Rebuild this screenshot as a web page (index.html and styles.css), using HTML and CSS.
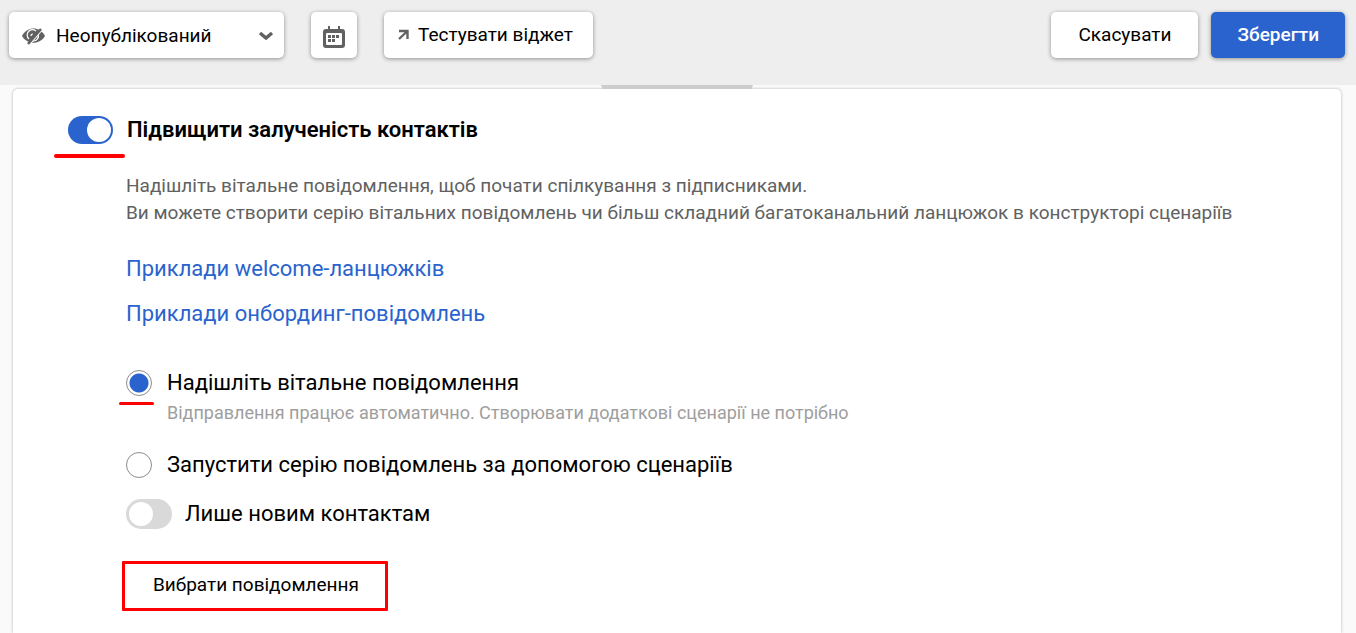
FILE: index.html
```html
<!DOCTYPE html>
<html lang="uk">
<head>
    <meta charset="UTF-8">
    <meta name="viewport" content="width=device-width, initial-scale=1.0">
    <title>Віджет підписки</title>
    <link rel="stylesheet" href="styles.css">
</head>
<body>
    <header class="toolbar">
        <div class="status">
            <svg class="status-eye" width="24" height="20" viewBox="0 0 24 20" aria-hidden="true">
                <path d="M0 10C5 0 18 0 23 10C18 19 5 19 0 10Z" fill="#616161"/>
                <path d="M7 13A5 5 0 0 1 14 5M16 8A5 5 0 0 1 11 15" fill="none" stroke="#fff" stroke-width="1.2"/>
                <path d="M9 10q0-2 2-2" fill="none" stroke="#fff" stroke-width="1.2"/>
                <path d="M8 18L20 4" stroke="#fff" stroke-width="1.4"/>
                <path d="M6 18L19 3" stroke="#616161" stroke-width="2.6"/>
            </svg>
            <select class="status-select" aria-label="Статус">
                <option>Неопублікований</option>
            </select>
            <svg class="status-arrow" width="16" height="10" viewBox="0 0 16 10" aria-hidden="true">
                <path d="M2 2l6 5 6-5" fill="none" stroke="#616161" stroke-width="3.4"/>
            </svg>
        </div>
        <button class="btn btn-icon" type="button" aria-label="Календар">
            <svg width="22" height="22" viewBox="0 0 22 22" aria-hidden="true">
                <path d="M5 0h2v3H5zM15 0h2v3h-2zM3 3h16q3 0 3 3v13q0 3-3 3H3q-3 0-3-3V6q0-3 3-3zM4 7q-1 0-1 1v10q0 1 1 1h14q1 0 1-1V8q0-1-1-1z" fill="#616161" fill-rule="evenodd"/>
                <path d="M5 9h3v3H5zM9 9h3v3H9zM13 9h3v3h-3zM5 13h3v3H5zM9 13h3v3H9z" fill="#616161"/>
            </svg>
        </button>
        <button class="btn btn-test" type="button">
            <svg width="12" height="12" viewBox="0 0 12 12" aria-hidden="true">
                <path d="M1 3h8.5v8M9.500 3L1 11" fill="none" stroke="#616161" stroke-width="2.400"/>
            </svg>
            Тестувати віджет
        </button>
        <div class="toolbar-actions">
            <button class="btn" type="button">Скасувати</button>
            <button class="btn btn-save" type="button">Зберегти</button>
        </div>
    </header>

    <main class="card">
        <span class="handle"></span>
        <div class="card-header">
            <span class="control">
                <input class="switch switch-main" type="checkbox" id="engage" checked>
                <span class="mark mark-switch"></span>
            </span>
            <label class="title" for="engage">Підвищити залученість контактів</label>
        </div>

        <div class="card-body">
            <p class="description">
                Надішліть вітальне повідомлення, щоб почати спілкування з підписниками.<br>
                Ви можете створити серію вітальних повідомлень чи більш складний багатоканальний ланцюжок в конструкторі сценаріїв
            </p>

            <div class="links">
                <a href="#">Приклади welcome-ланцюжків</a>
                <a href="#">Приклади онбординг-повідомлень</a>
            </div>

            <div class="option">
                <span class="control">
                    <input class="radio" type="radio" name="mode" id="welcome" checked>
                    <span class="mark mark-radio"></span>
                </span>
                <label for="welcome">Надішліть вітальне повідомлення</label>
            </div>
            <p class="hint">Відправлення працює автоматично. Створювати додаткові сценарії не потрібно</p>
            <div class="option">
                <span class="control">
                    <input class="radio" type="radio" name="mode" id="series">
                </span>
                <label for="series">Запустити серію повідомлень за допомогою сценаріїв</label>
            </div>
            <div class="option option-switch">
                <input class="switch" type="checkbox" id="only-new">
                <label for="only-new">Лише новим контактам</label>
            </div>

            <button class="choose" type="button">Вибрати повідомлення</button>
        </div>
    </main>
</body>
</html>
```

FILE: styles.css
```css
* {
    box-sizing: border-box;
}

body {
    margin: 0;
    min-height: 100vh;
    display: flex;
    flex-direction: column;
    background-color: #fafafa;
    font-family: Roboto, "Liberation Sans", sans-serif;
    color: #000;
}

.toolbar {
    display: flex;
    gap: 27px;
    padding: 12px 11px 27px 9px;
    background-color: #eee;
}

.status,
.btn {
    height: 46px;
    background-color: #fff;
    border: none;
    border-radius: 5px;
    box-shadow: 0 1px 4px rgba(0, 0, 0, 0.4);
}

.status {
    position: relative;
    width: 275px;
}

.status-select {
    width: 100%;
    height: 100%;
    padding: 0 40px 0 47px;
    appearance: none;
    background: none;
    border: none;
    font-family: inherit;
    font-size: 19px;
    color: #000;
}

.status-eye,
.status-arrow {
    position: absolute;
    pointer-events: none;
}

.status-eye {
    left: 13px;
    top: 14px;
}

.status-arrow {
    right: 10px;
    top: 19px;
}

.btn {
    padding: 0 27px 2px;
    font-family: inherit;
    font-size: 19px;
    color: #000;
    cursor: pointer;
}

.btn-icon {
    width: 46px;
    padding: 3px 0 0;
    display: flex;
    align-items: center;
    justify-content: center;
}

.btn-test {
    display: flex;
    align-items: center;
    gap: 8px;
    padding: 0 20px 2px 14px;
}

.toolbar-actions {
    display: flex;
    gap: 13px;
    margin-left: auto;
}

.btn-save {
    padding: 0 26px 2px;
    background-color: #2a63cd;
    color: #fff;
    font-weight: 500;
}

.card {
    position: relative;
    flex: 1;
    margin: 4px 15px 0 13px;
    padding: 25px 55px 20px;
    background-color: #fff;
    border-radius: 5px 5px 0 0;
    box-shadow: 0 0 3px rgba(0, 0, 0, 0.3);
}

.handle {
    position: absolute;
    top: -4px;
    left: 50%;
    width: 152px;
    height: 4px;
    margin-left: -76px;
    background-color: #ccc;
    clip-path: polygon(0 0, 100% 0, 99% 100%, 1% 100%);
}

.card-header {
    display: flex;
    align-items: center;
    gap: 14px;
}

.control {
    position: relative;
    display: flex;
}

.title {
    font-size: 22px;
    font-weight: 600;
    line-height: 32px;
}

.switch {
    appearance: none;
    width: 46px;
    height: 30px;
    margin: 0;
    padding: 3px;
    display: flex;
    border-radius: 15px;
    background-color: #d9d9d9;
    cursor: pointer;
}

.switch::before {
    content: "";
    width: 24px;
    height: 24px;
    border-radius: 50%;
    background-color: #fff;
}

.switch:checked {
    justify-content: flex-end;
    background-color: #2a63cd;
}

.switch-main {
    width: 45px;
    height: 28px;
    padding: 2px;
}

/* red underlines that point at the selected controls */
.mark {
    position: absolute;
    height: 4px;
    border-radius: 2px;
    background-color: #f00;
}

.mark-switch {
    top: 38px;
    left: -14px;
    width: 71px;
}

.mark-radio {
    top: 32px;
    left: -7px;
    height: 3px;
    width: 35px;
}

.card-body {
    padding-left: 58px;
}

.description {
    margin: 26px 0 20px;
    font-size: 19px;
    line-height: 27px;
    color: #616161;
}

.links {
    display: flex;
    flex-direction: column;
    align-items: flex-start;
    margin-bottom: 32px;
}

.links a {
    font-size: 22px;
    line-height: 45px;
    color: #2a63cd;
    text-decoration: none;
}

.option {
    display: flex;
    align-items: center;
    gap: 15px;
    font-size: 22px;
    line-height: 30px;
}

.radio {
    appearance: none;
    width: 26px;
    height: 26px;
    margin: 0;
    border: 1px solid #8c8c8c;
    border-radius: 50%;
    background-color: #fff;
    cursor: pointer;
}

.radio:checked {
    background: radial-gradient(circle, #2a63cd 9px, #fff 10px);
}

.hint {
    margin: 2px 0 24px 41px;
    font-size: 18px;
    line-height: 26px;
    color: #9e9e9e;
}

.option-switch {
    margin-top: 19px;
    gap: 13px;
}

.choose {
    display: block;
    height: 50px;
    margin: 32px 0 0 -4px;
    padding: 0 26px 3px 28px;
    background-color: #fff;
    border: 3px solid #f00;
    border-radius: 1px;
    font-family: inherit;
    font-size: 19px;
    color: #000;
    cursor: pointer;
}
```
